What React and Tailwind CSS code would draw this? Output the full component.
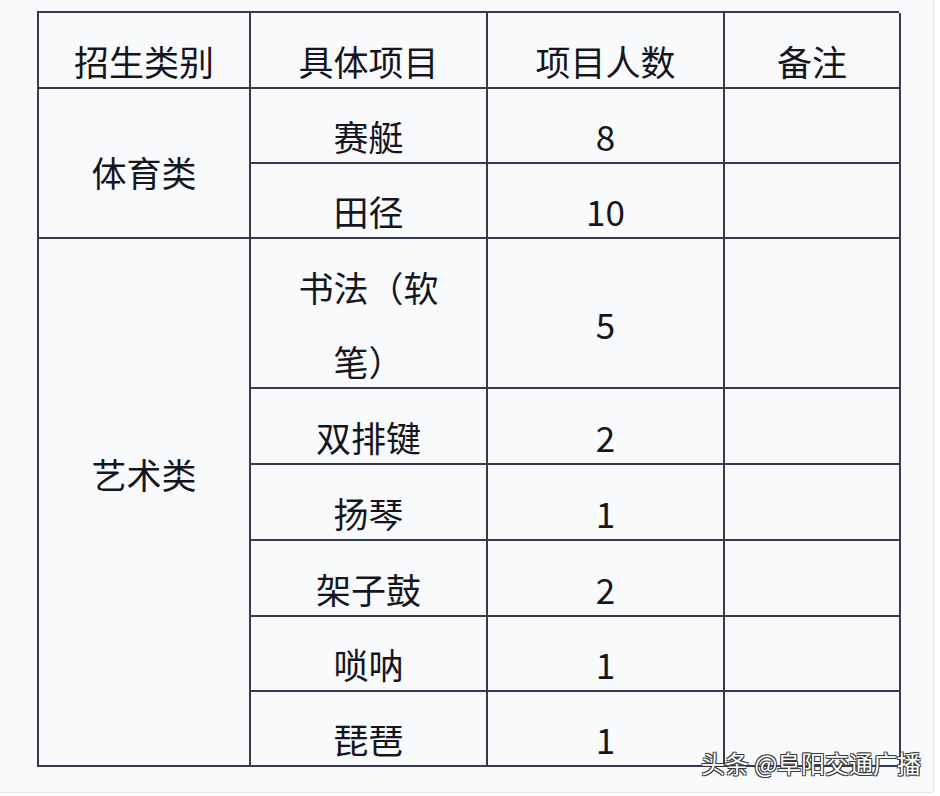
import React from 'react';

const rows = [
  { name: '赛艇', count: '8', h: 'h-[75px]' },
  { name: '田径', count: '10', h: 'h-[75px]' },
  { name: ['书法（软', '笔）'], count: '5', h: 'h-[150px]' },
  { name: '双排键', count: '2', h: 'h-[76px]' },
  { name: '扬琴', count: '1', h: 'h-[76px]' },
  { name: '架子鼓', count: '2', h: 'h-[76px]' },
  { name: '唢呐', count: '1', h: 'h-[75px]' },
  { name: '琵琶', count: '1', h: 'h-[75px]' },
];

const cell = 'flex items-center justify-center border-r-2 border-b-2 border-[#3a3850] pt-[21px]';

const App = () => {
  return (
    <div
      className="relative w-[940px] h-[796px] bg-white text-[#16151d]"
      style={{ fontFamily: '"Noto Sans CJK SC", "Noto Sans", sans-serif' }}
    >
      <div className="w-[934px] h-[793px] bg-[#f9fafc] border-r border-b border-[#e6e7ec] pt-[11px] pl-[37px]">
        <div className="grid grid-cols-[212px_237px_237px_176px] w-[862px] border-t-2 border-l-2 border-[#3a3850] text-[35px] leading-[48px]">
          {/* header */}
          <div className={`${cell} h-[76px]`}>招生类别</div>
          <div className={`${cell} h-[76px]`}>具体项目</div>
          <div className={`${cell} h-[76px]`}>项目人数</div>
          <div className={`${cell} h-[76px]`}>备注</div>

          {/* 体育类 */}
          <div className="row-span-2 flex items-center justify-center border-r-2 border-b-2 border-[#3a3850] pt-[18px]">
            体育类
          </div>
          {rows.slice(0, 2).map((r) => (
            <React.Fragment key={r.name}>
              <div className={`${cell} ${r.h}`}>{r.name}</div>
              <div className={`${cell} ${r.h}`}>{r.count}</div>
              <div className={`${cell} ${r.h}`}></div>
            </React.Fragment>
          ))}

          {/* 艺术类 */}
          <div className="row-span-6 flex items-center justify-center border-r-2 border-b-2 border-[#3a3850] pb-[56px]">
            艺术类
          </div>
          {rows.slice(2).map((r, i) => (
            <React.Fragment key={i}>
              <div className={`${cell} ${r.h}`}>
                {Array.isArray(r.name) ? (
                  <div className="text-center leading-[74px]">
                    {r.name[0]}
                    <br />
                    {r.name[1]}
                  </div>
                ) : (
                  r.name
                )}
              </div>
              <div className={`${cell} ${r.h}`}>{r.count}</div>
              <div className={`${cell} ${r.h}`}></div>
            </React.Fragment>
          ))}
        </div>
      </div>

      <div className="absolute left-[701px] top-[749px] text-[24px] leading-[28px] text-white [text-shadow:1px_1px_0_#3a3a3a,-1px_-1px_0_#3a3a3a,1px_-1px_0_#3a3a3a,-1px_1px_0_#3a3a3a]">
        头条 @阜阳交通广播
      </div>
    </div>
  );
};

export default App;
